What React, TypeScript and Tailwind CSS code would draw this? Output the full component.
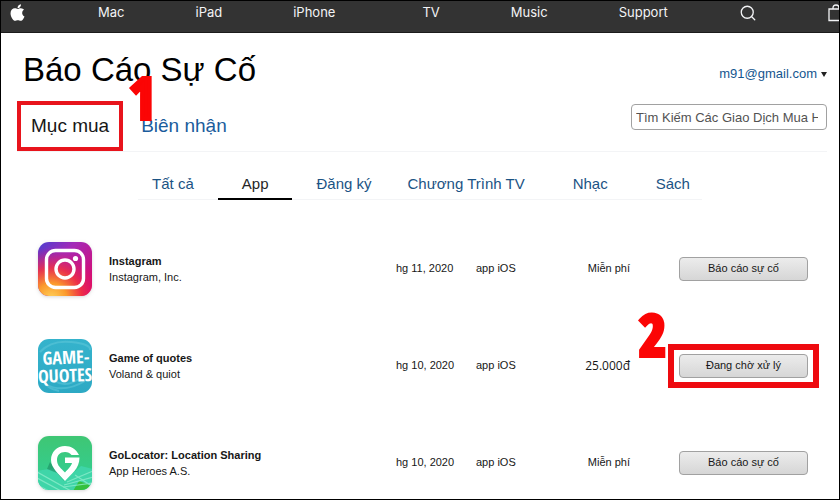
import React from "react";
import { FaApple } from "react-icons/fa";
import { Search } from "lucide-react";
import clsx from "clsx";

const NAV = ["Mac", "iPad", "iPhone", "TV", "Music", "Support"];

const FILTERS = [
  { label: "Tất cả", pad: "pl-3.5 pr-6" },
  { label: "App", pad: "px-6", active: true },
  { label: "Đăng ký", pad: "pl-6 pr-3" },
  { label: "Chương Trình TV", pad: "px-6" },
  { label: "Nhạc", pad: "px-6" },
  { label: "Sách", pad: "pl-6 pr-3" },
];

function InstagramIcon() {
  return (
    <svg viewBox="0 0 56 56" className="size-14 shrink-0 drop-shadow" aria-hidden="true">
      <defs>
        <linearGradient id="ig-base" x1="0" y1="0" x2="1" y2="1">
          <stop offset="0" stopColor="#4a3fd0" />
          <stop offset="0.35" stopColor="#a32ab8" />
          <stop offset="1" stopColor="#e6005c" />
        </linearGradient>
        <radialGradient id="ig-warm" cx="0.25" cy="1.05" r="0.95">
          <stop offset="0" stopColor="#ffd25a" />
          <stop offset="0.3" stopColor="#fb9a2c" />
          <stop offset="0.6" stopColor="#f2333f" stopOpacity="0.85" />
          <stop offset="1" stopColor="#d3107a" stopOpacity="0" />
        </radialGradient>
      </defs>
      <rect x="1" y="1" width="54" height="54" rx="11" fill="url(#ig-base)" />
      <rect x="1" y="1" width="54" height="54" rx="11" fill="url(#ig-warm)" />
      <g fill="none" stroke="#fff" strokeWidth="3.4">
        <rect x="9.5" y="9.5" width="37" height="37" rx="9" />
        <circle cx="28" cy="28" r="9" />
      </g>
      <circle cx="38.5" cy="17.5" r="2.6" fill="#fff" />
    </svg>
  );
}

function QuotesIcon() {
  return (
    <svg viewBox="0 0 56 56" className="size-14 shrink-0" aria-hidden="true">
      <defs>
        <linearGradient id="gq-base" x1="0" y1="0" x2="0" y2="1">
          <stop offset="0" stopColor="#35b3cc" />
          <stop offset="1" stopColor="#2da9c4" />
        </linearGradient>
      </defs>
      <rect x="1" y="1" width="54" height="54" rx="11" fill="url(#gq-base)" />
      <g fill="none" stroke="#5cc6d9" strokeWidth="2" opacity="0.6">
        <path d="M3 14Q14 2 34 4T53 12" />
        <path d="M8 46Q26 56 48 43" />
        <path d="M18 43Q28 50 42 41" />
        <path d="M4 40Q10 51 22 53" />
      </g>
      <g
        fill="#fff"
        fontWeight="700"
        textAnchor="middle"
        fontFamily="'Open Sans Condensed', 'Roboto Condensed', Roboto, sans-serif"
      >
        <text x="29" y="26" fontSize="18" transform="rotate(-2 28 20)">GAME-</text>
        <text x="28" y="44" fontSize="18" transform="rotate(-2 28 38)">QUOTES</text>
      </g>
    </svg>
  );
}

function LocatorIcon() {
  return (
    <svg viewBox="0 0 56 56" className="size-14 shrink-0 drop-shadow" aria-hidden="true">
      <defs>
        <linearGradient id="gl-base" x1="0" y1="0" x2="0" y2="1">
          <stop offset="0" stopColor="#3fc673" />
          <stop offset="1" stopColor="#2fd09a" />
        </linearGradient>
        <clipPath id="gl-clip">
          <rect x="1" y="1" width="54" height="54" rx="11" />
        </clipPath>
      </defs>
      <g clipPath="url(#gl-clip)">
        <rect width="56" height="56" fill="url(#gl-base)" />
        <path d="M0 36L18 33L27 46L44 31L56 34V56H0Z" fill="#3fd5a8" />
        <path d="M13 27L28 47L20 38L10 34Z" fill="#1c8a60" opacity="0.6" />
        <path d="M36 56L42 46L56 51V56Z" fill="#35c03f" />
        <g fill="none" stroke="#8beccb" strokeWidth="1.2" opacity="0.8">
          <path d="M0 37L34 56" />
          <path d="M0 43L24 56" />
          <path d="M0 50L12 56" />
          <path d="M30 47L56 36" />
          <path d="M27 50L56 42" />
          <path d="M38 40L56 52" />
          <path d="M26 52L56 48" />
        </g>
      </g>
      <path
        d="M42 20C39 14 34 11 28 11C20 11 14 17 14 25C14 33 22 39 28 46C34 39 42.500 34 42.500 22.500H28V28H35C34 32 30 35 28 37.500C24 33 20 31 20 25C20 20 23 17 28 17C31 17 33 18 34.500 20Z"
        fill="#fff"
      />
    </svg>
  );
}

const PURCHASES = [
  {
    icon: <InstagramIcon />,
    name: "Instagram",
    vendor: "Instagram, Inc.",
    date: "hg 11, 2020",
    price: "Miễn phí",
    action: "Báo cáo sự cố",
  },
  {
    icon: <QuotesIcon />,
    name: "Game of quotes",
    vendor: "Voland & quiot",
    date: "hg 10, 2020",
    price: "25.000đ",
    paid: true,
    action: "Đang chờ xử lý",
    marked: true,
  },
  {
    icon: <LocatorIcon />,
    name: "GoLocator: Location Sharing",
    vendor: "App Heroes A.S.",
    date: "hg 10, 2020",
    price: "Miễn phí",
    action: "Báo cáo sự cố",
  },
];

function StepNumber({ value, className }: { value: number; className: string }) {
  return (
    <span
      className={clsx(
        "pointer-events-none absolute z-10 font-['Open_Sans_Condensed','Roboto_Condensed',Roboto,sans-serif] text-[58px] leading-[48px] font-black text-[#fb0505] [-webkit-text-stroke:4px_#fb0505]",
        className
      )}
    >
      {value}
    </span>
  );
}

function TopBar() {
  return (
    <header className="flex h-8 shrink-0 items-center gap-[71px] overflow-hidden border-b border-[#1c1c1c] bg-[#333333] pb-2 pl-[7px] font-['Inter',sans-serif] text-[13px] text-gray-100">
      <a href="#" aria-label="Apple" className="shrink-0 text-white">
        <FaApple className="size-[19px]" />
      </a>
      {NAV.map((item) => (
        <a key={item} href="#" className={clsx("shrink-0", item === "TV" && "pl-4")}>
          {item}
        </a>
      ))}
      <button type="button" aria-label="Search" className="shrink-0">
        <Search className="size-[18px]" strokeWidth={1.75} />
      </button>
      <a href="#" aria-label="Bag" className="shrink-0">
        <svg viewBox="0 0 16 18" className="h-[18px] w-4" fill="none" stroke="currentColor" strokeWidth="1.3">
          <path d="M1 5H15V16.500H1Z" />
          <path d="M5 5V4Q5 1 8 1T11 4V5" />
        </svg>
      </a>
    </header>
  );
}

export default function App() {
  return (
    <div className="flex h-screen flex-col overflow-hidden border border-black bg-white font-['Liberation_Sans',Arial,sans-serif] text-neutral-900">
      <TopBar />

      <main className="px-3 pt-[17px]">
        <section className="ml-1 flex justify-between border-b border-gray-100">
          <div>
            <h1 className="pl-1.5 text-[33px] leading-10 text-black">Báo Cáo Sự Cố</h1>
            <div className="relative mt-[11px] flex items-center gap-[18px] text-[19px]">
              <button type="button" className="h-[50px] border-4 border-[#e8141c] px-2.5">
                Mục mua
              </button>
              <StepNumber value={1} className="-top-7 left-28" />
              <button type="button" className="text-[#1a5c9c]">
                Biên nhận
              </button>
            </div>
          </div>

          <div className="flex flex-col items-end gap-5 pt-3.5">
            <button type="button" className="flex h-5 items-center gap-1 text-[13px] text-[#14568f]">
              m91@gmail.com
              <svg viewBox="0 0 6 5" className="h-[5px] w-1.5" fill="#222" aria-hidden="true">
                <path d="M0 0H6L3 5Z" />
              </svg>
            </button>
            <input
              type="text"
              aria-label="Tìm kiếm"
              placeholder="Tìm Kiếm Các Giao Dịch Mua Hàng"
              className="h-[26px] w-[196px] rounded border border-neutral-400 pr-2 pl-1 text-[13px] placeholder:text-neutral-600"
            />
          </div>
        </section>

        <nav className="flex justify-center pt-5">
          <ul className="flex border-b border-gray-100 text-[15px] text-[#1b5384]">
            {FILTERS.map((f) => (
              <li
                key={f.label}
                className={clsx(
                  "-mb-px border-b-2 pb-0.5 leading-6",
                  f.pad,
                  f.active ? "border-black text-neutral-800" : "border-transparent"
                )}
              >
                <button type="button">{f.label}</button>
              </li>
            ))}
          </ul>
        </nav>

        <table className="mt-5 w-full table-fixed text-left text-[11px]">
          <colgroup>
            <col />
            <col className="w-20" />
            <col className="w-20" />
            <col className="w-[74px]" />
            <col className="w-[197px]" />
          </colgroup>
          <tbody>
            {PURCHASES.map((p) => (
              <tr key={p.name} className="h-[97px]">
                <td className="pl-6">
                  <div className="flex items-center gap-4">
                    {p.icon}
                    <div className="leading-4">
                      <p className="font-bold">{p.name}</p>
                      <p>{p.vendor}</p>
                    </div>
                  </div>
                </td>
                <td>{p.date}</td>
                <td>app iOS</td>
                <td className={clsx("text-right", p.paid && "font-['Open_Sans',sans-serif] text-xs")}>{p.price}</td>
                <td className="pr-[19px] pl-[49px]">
                  <div className="relative">
                    {p.marked && (
                      <>
                        <StepNumber value={2} className="-top-11 -left-10" />
                        <span className="pointer-events-none absolute -inset-x-[11px] -inset-y-2.5 border-[6px] border-[#ee0a0f]" />
                      </>
                    )}
                    <button
                      type="button"
                      className="block h-6 w-full rounded-sm border border-neutral-400 bg-linear-to-b from-[#ececec] to-[#d6d6d6] text-[11px]"
                    >
                      {p.action}
                    </button>
                  </div>
                </td>
              </tr>
            ))}
          </tbody>
        </table>
      </main>
    </div>
  );
}
